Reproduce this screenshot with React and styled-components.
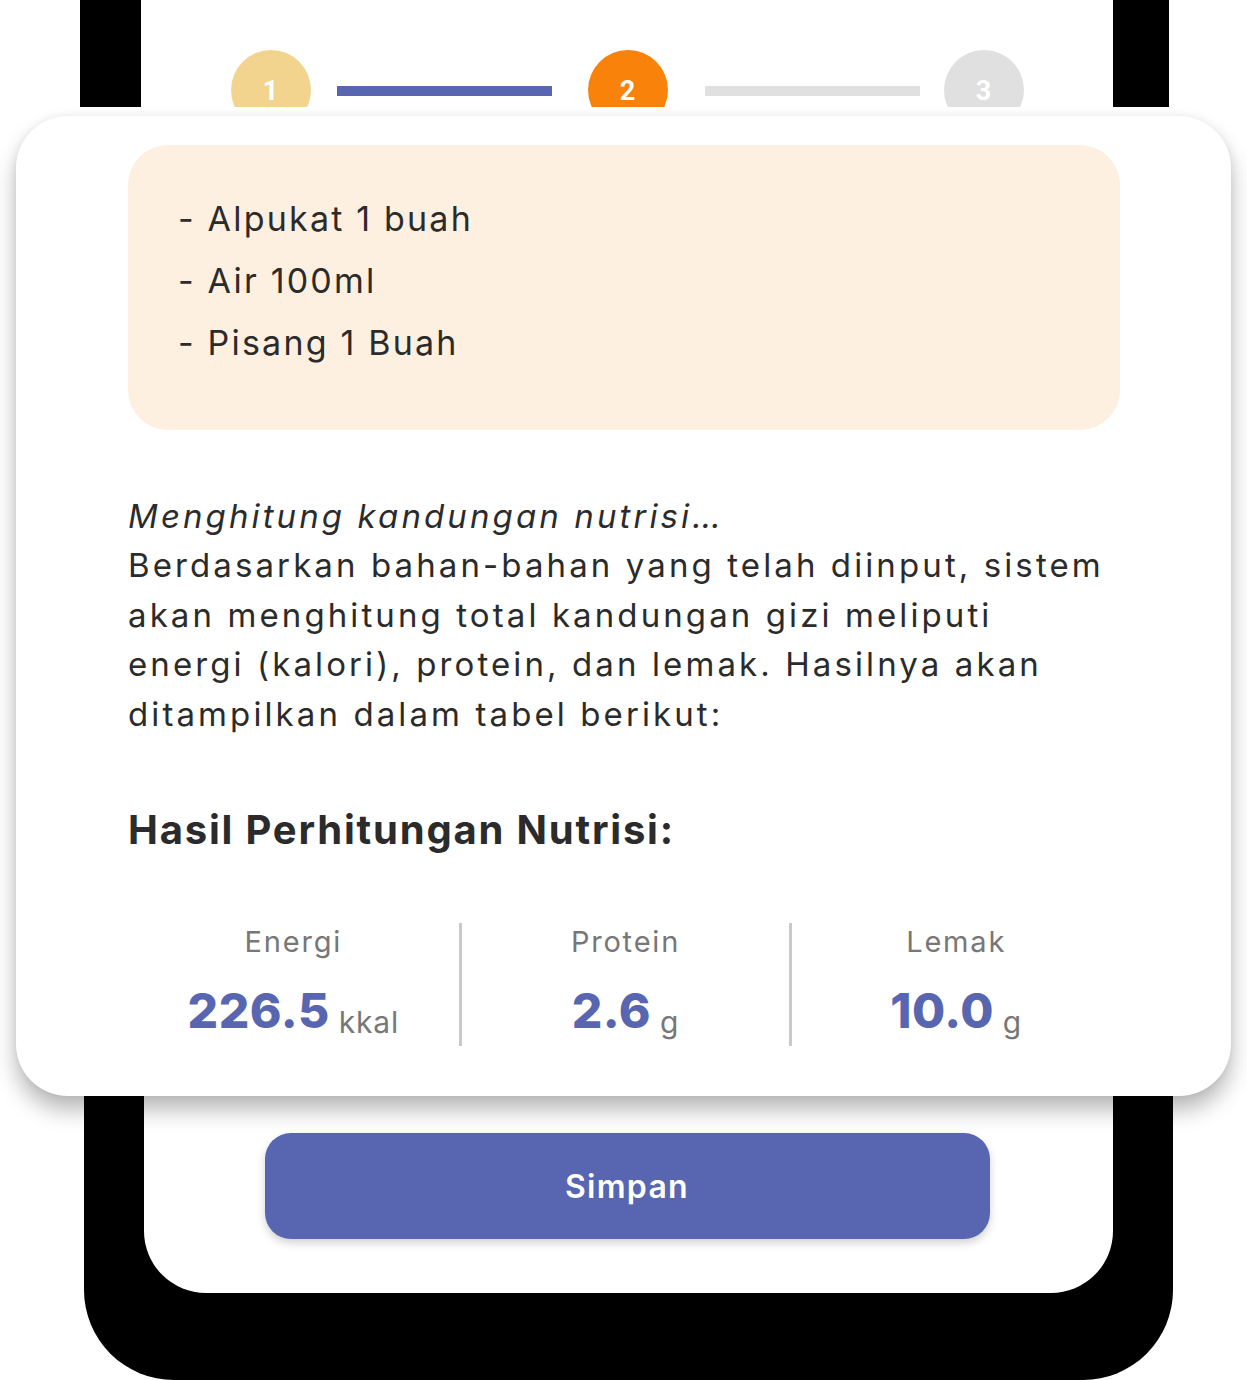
import React from 'react';
import styled, { createGlobalStyle } from 'styled-components';

const GlobalStyle = createGlobalStyle`
    body {
        margin: 0;
        background: #ffffff;
        font-family: Inter, "Noto Sans", sans-serif;
        color: #2b2b2b;
    }
`;

const Page = styled.div`
    width: 1247px;
    height: 1380px;
    overflow: hidden;
    display: flex;
    flex-direction: column;
    align-items: center;
`;

const PhoneTop = styled.div`
    width: 1089px;
    height: 107px;
    margin-left: 2px;
    display: flex;
    overflow: hidden;
    background: #000;
    padding: 0 56px 0 61px;
    box-sizing: border-box;
`;

const ScreenTop = styled.div`
    flex: 1;
    background: #fff;
    display: flex;
    justify-content: center;
    align-items: flex-start;
    padding-top: 50px;
`;

const Step = styled.div`
    width: 80px;
    height: 80px;
    border-radius: 50%;
    flex-shrink: 0;
    background: ${props => props.color};
    color: #fff;
    font-family: Roboto, sans-serif;
    font-weight: 700;
    font-size: 27px;
    display: flex;
    align-items: center;
    justify-content: center;
    padding-top: 2px;
    box-sizing: border-box;
`;

const StepLine = styled.div`
    width: 215px;
    height: 10px;
    margin: 36px ${props => props.right}px 0 ${props => props.left}px;
    background: ${props => props.active ? '#5865b0' : '#e0e0e0'};
`;

const Card = styled.div`
    position: relative;
    z-index: 2;
    width: 1215px;
    margin-top: 9px;
    box-sizing: border-box;
    padding: 29px 111px 50px 112px;
    background: #fff;
    border-radius: 52px;
    box-shadow: 0 14px 22px rgba(0, 0, 0, 0.28), 0 0 8px rgba(0, 0, 0, 0.06);
`;

const Ingredients = styled.ul`
    list-style: none;
    margin: 0;
    padding: 43px 50px 56px;
    background: #fdf0e0;
    border-radius: 40px;

    li {
        font-size: 34px;
        line-height: 62px;
        letter-spacing: 2.2px;
    }
`;

const Paragraph = styled.p`
    margin: 62px 0 0;
    max-width: 990px;
    font-size: 33px;
    line-height: 49.5px;
    letter-spacing: 3.1px;

    em {
        display: block;
    }
`;

const Heading = styled.h2`
    margin: 66px 0 0;
    font-size: 40px;
    line-height: 50px;
    font-weight: 700;
    color: #2b2b2b;
    letter-spacing: 1.8px;
`;

const Stats = styled.div`
    display: grid;
    grid-template-columns: repeat(3, 1fr);
    margin-top: 68px;
`;

const Stat = styled.div`
    display: flex;
    flex-direction: column;
    align-items: center;
    height: 123px;
    border-left: ${props => props.divider ? '3px solid #c9c9c9' : 'none'};
`;

const Label = styled.div`
    font-size: 29px;
    line-height: 38px;
    color: #777;
    letter-spacing: 1.8px;
`;

const ValueRow = styled.div`
    display: flex;
    align-items: baseline;
    gap: 9px;
    margin-top: 22px;
`;

const Value = styled.span`
    font-size: 48px;
    line-height: 56px;
    font-weight: 800;
    color: #5865b0;
    letter-spacing: 0.5px;
`;

const Unit = styled.span`
    font-size: 30px;
    color: #777;
    letter-spacing: 0.8px;
    position: relative;
    top: 5px;
`;

const PhoneBottom = styled.div`
    width: 1089px;
    margin-left: 10px;
    background: #000;
    padding: 0 60px 87px;
    box-sizing: border-box;
    border-radius: 0 0 90px 90px;
`;

const ScreenBottom = styled.div`
    background: #fff;
    height: 197px;
    border-radius: 0 0 62px 62px;
    display: flex;
    justify-content: center;
    padding-top: 37px;
    box-sizing: border-box;
`;

const SaveButton = styled.button`
    width: 725px;
    height: 106px;
    margin-left: -3px;
    border: none;
    border-radius: 26px;
    background: #5865b0;
    color: #fff;
    font-family: Inter, sans-serif;
    font-size: 32px;
    font-weight: 600;
    letter-spacing: 1.3px;
    box-shadow: 0 4px 8px rgba(0, 0, 0, 0.18);
`;

const stats = [
    { label: 'Energi', value: '226.5', unit: 'kkal' },
    { label: 'Protein', value: '2.6', unit: 'g' },
    { label: 'Lemak', value: '10.0', unit: 'g' },
];

export default function App() {
    return (
        <Page>
            <GlobalStyle />
            <PhoneTop>
                <ScreenTop>
                    <Step color='#f2d48e'>1</Step>
                    <StepLine active left={26} right={36} />
                    <Step color='#f8820a'>2</Step>
                    <StepLine left={37} right={24} />
                    <Step color='#e0e0e0'>3</Step>
                </ScreenTop>
            </PhoneTop>

            <Card>
                <Ingredients>
                    <li>- Alpukat 1 buah</li>
                    <li>- Air 100ml</li>
                    <li>- Pisang 1 Buah</li>
                </Ingredients>

                <Paragraph>
                    <em>Menghitung kandungan nutrisi…</em>
                    Berdasarkan bahan-bahan yang telah diinput, sistem akan menghitung total kandungan gizi meliputi energi (kalori), protein, dan lemak. Hasilnya akan ditampilkan dalam tabel berikut:
                </Paragraph>

                <Heading>Hasil Perhitungan Nutrisi:</Heading>

                <Stats>
                    {stats.map((s, i) => (
                        <Stat key={s.label} divider={i > 0}>
                            <Label>{s.label}</Label>
                            <ValueRow>
                                <Value>{s.value}</Value>
                                <Unit>{s.unit}</Unit>
                            </ValueRow>
                        </Stat>
                    ))}
                </Stats>
            </Card>

            <PhoneBottom>
                <ScreenBottom>
                    <SaveButton>Simpan</SaveButton>
                </ScreenBottom>
            </PhoneBottom>
        </Page>
    );
}
